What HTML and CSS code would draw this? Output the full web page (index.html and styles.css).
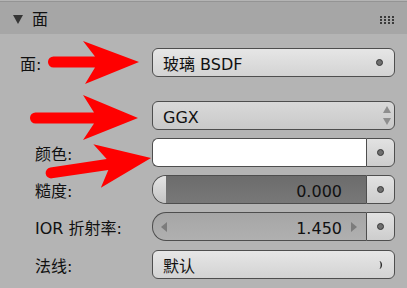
FILE: index.html
```html
<!DOCTYPE html>
<html>
<head>
<meta charset="utf-8">
<link rel="stylesheet" href="styles.css">
</head>
<body>
<div class="panel">
  <div class="header">
    <svg class="tri" width="10" height="9" viewBox="0 0 10 9"><polygon points="0,0 10,0 5,9" fill="#363636"/></svg>
    <span class="title">面</span>
    <svg class="grip" width="14" height="8" viewBox="0 0 14 8">
      <g fill="#3a3a3a">
        <rect x="0" y="0" width="2" height="2"/><rect x="4" y="0" width="2" height="2"/><rect x="8" y="0" width="2" height="2"/><rect x="12" y="0" width="2" height="2"/>
        <rect x="0" y="3" width="2" height="2"/><rect x="4" y="3" width="2" height="2"/><rect x="8" y="3" width="2" height="2"/><rect x="12" y="3" width="2" height="2"/>
        <rect x="0" y="6" width="2" height="2"/><rect x="4" y="6" width="2" height="2"/><rect x="8" y="6" width="2" height="2"/><rect x="12" y="6" width="2" height="2"/>
      </g>
    </svg>
  </div>
  <div class="body">
    <div class="row first">
      <span class="label node">面:</span>
      <div class="field menu">
        <span class="txt">玻璃 BSDF</span>
        <span class="dot"></span>
      </div>
    </div>
    <div class="row second">
      <span class="label"></span>
      <div class="field enum">
        <span class="txt">GGX</span>
        <svg class="updown" width="8" height="19" viewBox="0 0 8 19"><polygon points="4,0 8,7 0,7" fill="#8e8e8e"/><polygon points="0,12 8,12 4,19" fill="#8e8e8e"/></svg>
      </div>
    </div>
    <div class="row">
      <span class="label">颜色:</span>
      <div class="combo">
        <div class="swatch"></div>
        <div class="socket"><span class="dot"></span></div>
      </div>
    </div>
    <div class="row">
      <span class="label">糙度:</span>
      <div class="combo">
        <div class="slider">
          <div class="cap"></div>
          <div class="fill"><span class="txt">0.000</span></div>
        </div>
        <div class="socket"><span class="dot"></span></div>
      </div>
    </div>
    <div class="row">
      <span class="label">IOR 折射率:</span>
      <div class="combo">
        <div class="num">
          <svg class="larr" width="6" height="10" viewBox="0 0 6 10"><polygon points="6,0 6,10 0,5" fill="#7c7c7c"/></svg>
          <span class="txt grow">1.450</span>
          <svg class="rarr" width="6" height="10" viewBox="0 0 6 10"><polygon points="0,0 6,5 0,10" fill="#7c7c7c"/></svg>
        </div>
        <div class="socket"><span class="dot"></span></div>
      </div>
    </div>
    <div class="row last">
      <span class="label">法线:</span>
      <div class="field menu">
        <span class="txt">默认</span>
        <svg class="moon" width="4" height="8" viewBox="0 0 4 8"><path d="M0.5,0 C4,1 4,7 0.5,8 C2,6 2,2 0.5,0 Z" fill="#2e2e2e"/></svg>
      </div>
    </div>
  </div>
  <svg class="arrows" width="407" height="288" viewBox="0 0 407 288">
    <g fill="#ff0000">
      <path transform="translate(139,62)" d="M0,0 L-56,-21 L-44,-5.5 L-85.5,-5.5 A5.5,5.5 0 0 0 -85.5,5.5 L-44,5.5 L-54,22 Z"/>
      <path transform="translate(138,118)" d="M0,0 L-55,-23 L-44,-5.5 L-102.5,-5.5 A5.5,5.5 0 0 0 -102.5,5.5 L-44,5.5 L-55,22 Z"/>
      <path transform="translate(151,158) rotate(-8.5)" d="M0,0 L-55,-22 L-44,-5.5 L-101,-5.5 A5.5,5.5 0 0 0 -101,5.5 L-44,5.5 L-54,22 Z"/>
    </g>
  </svg>
</div>
</body>
</html>
```
FILE: styles.css
```css
html, body {
  margin: 0;
  padding: 0;
  background: #b4b4b4;
}
.panel {
  position: relative;
  width: 407px;
  height: 288px;
  overflow: hidden;
  background: #b4b4b4;
  font-family: "DejaVu Sans", "Noto Sans CJK SC", sans-serif;
  font-size: 16px;
  line-height: 18px;
  color: #111;
  padding-top: 1px;
  box-sizing: border-box;
}
.header {
  height: 33px;
  box-sizing: border-box;
  border-top: 1px solid #949494;
  background: #a6a6a6;
  display: flex;
  align-items: center;
  padding: 0 13px;
}
.tri {
  display: block;
  margin-top: 3px;
}
.title {
  margin-left: 9px;
  padding-top: 4px;
  flex: 1;
}
.grip {
  display: block;
  margin-top: 4px;
}
.body {
  padding-top: 14px;
  display: flex;
  flex-direction: column;
  gap: 8px;
}
.row {
  display: grid;
  grid-template-columns: 152px 243px;
  height: 29px;
  align-items: center;
}
.row.second {
  margin-top: 16px;
}
.row.last {
  margin-top: 1px;
}
.label {
  padding-left: 35px;
  padding-top: 5px;
  white-space: nowrap;
}
.label.node {
  padding-left: 20px;
}
.txt {
  padding-top: 5px;
  white-space: nowrap;
}
.field {
  height: 29px;
  box-sizing: border-box;
  border: 1px solid #4e4e4e;
  border-radius: 6px;
  background: linear-gradient(#e6e6e6, #d3d3d3);
  display: flex;
  align-items: center;
  justify-content: space-between;
  padding: 0 11px 0 10px;
}
.field.enum {
  background: linear-gradient(#d9d9d9, #c9c9c9);
  padding-right: 3px;
}
.dot {
  display: block;
  width: 7px;
  height: 7px;
  box-sizing: border-box;
  border-radius: 50%;
  background: #6f6f6f;
  border: 1px solid #383838;
}
.updown, .moon, .larr, .rarr {
  display: block;
}
.combo {
  display: flex;
  height: 29px;
}
.swatch {
  flex: 1;
  background: #ffffff;
  border: 1px solid #4e4e4e;
  border-right: none;
  border-radius: 6px 0 0 6px;
}
.socket {
  width: 29px;
  box-sizing: border-box;
  border: 1px solid #4e4e4e;
  border-radius: 0 6px 6px 0;
  background: linear-gradient(#e2e2e2, #cdcdcd);
  display: flex;
  align-items: center;
  justify-content: center;
}
.slider {
  flex: 1;
  display: flex;
  border: 1px solid #4e4e4e;
  border-right: none;
  border-radius: 14px 0 0 14px;
  overflow: hidden;
}
.cap {
  width: 13px;
  background: linear-gradient(#e4e4e4, #c4c4c4);
}
.fill {
  flex: 1;
  background: linear-gradient(#6c6c6c, #787878);
  display: flex;
  align-items: center;
  justify-content: flex-end;
  padding-right: 24px;
}
.num {
  flex: 1;
  display: flex;
  align-items: center;
  border: 1px solid #4e4e4e;
  border-right: none;
  border-radius: 14px 0 0 14px;
  background: linear-gradient(#a6a6a6, #b0b0b0);
  padding: 0 9px 0 8px;
}
.grow {
  flex: 1;
  text-align: right;
  margin-right: 9px;
}
.arrows {
  position: absolute;
  left: 0;
  top: 0;
  pointer-events: none;
}
```
